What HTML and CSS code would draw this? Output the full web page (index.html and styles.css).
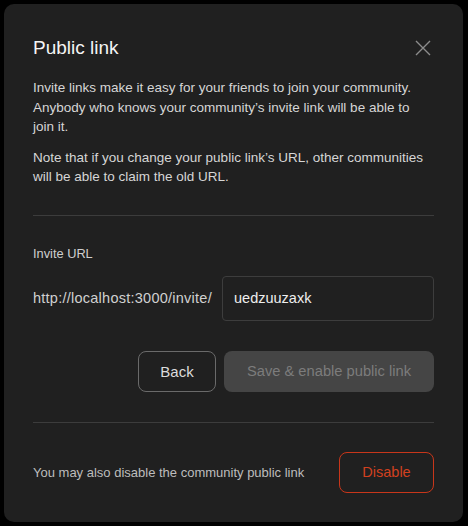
FILE: index.html
```html
<!DOCTYPE html>
<html>
<head>
<meta charset="utf-8">
<link rel="stylesheet" href="styles.css">
</head>
<body>
<div class="modal">
  <div class="header">
    <h1 class="title">Public link</h1>
    <button class="close" aria-label="Close">
      <svg width="16" height="16" viewBox="0 0 16 16"><path d="M1 1 L15 15 M15 1 L1 15" stroke="#8c8c8c" stroke-width="1.4" fill="none"/></svg>
    </button>
  </div>
  <p class="desc">Invite links make it easy for your friends to join your community. Anybody who knows your community’s invite link will be able to join it.</p>
  <p class="desc note">Note that if you change your public link’s URL, other communities will be able to claim the old URL.</p>
  <hr class="divider first">
  <div class="label">Invite URL</div>
  <div class="url-row">
    <span class="prefix">http://localhost:3000/invite/</span>
    <div class="input">uedzuuzaxk</div>
  </div>
  <div class="actions">
    <button class="btn back">Back</button>
    <button class="btn save">Save &amp; enable public link</button>
  </div>
  <hr class="divider second">
  <div class="footer">
    <span class="footer-text">You may also disable the community public link</span>
    <button class="btn disable">Disable</button>
  </div>
</div>
</body>
</html>
```
FILE: styles.css
```css
html, body {
  margin: 0;
  padding: 0;
  background: #000;
  font-family: "Liberation Sans", Arial, sans-serif;
}
.modal {
  margin: 4px;
  width: 459px;
  height: 518px;
  box-sizing: border-box;
  padding: 30px 29px 29px;
  background: #202020;
  border-radius: 10px;
  color: #ddd;
}
.header {
  display: flex;
  justify-content: space-between;
  align-items: center;
  height: 28px;
}
.title {
  margin: 0;
  font-size: 19px;
  font-weight: 500;
  color: #f4f4f4;
}
.close {
  background: none;
  border: 0;
  padding: 0;
  margin-right: 3px;
  width: 16px;
  height: 16px;
  display: flex;
}
.desc {
  margin: 16px 0 0;
  font-size: 13.5px;
  line-height: 19.5px;
  color: #d6d6d6;
}
.desc.note {
  margin-top: 11px;
}
.divider {
  border: 0;
  height: 1px;
  background: #3c3c3c;
  margin: 28px 0 0;
}
.label {
  margin-top: 30px;
  font-size: 12.8px;
  line-height: 16px;
  color: #cfcfcf;
}
.url-row {
  margin-top: 14px;
  display: flex;
  align-items: center;
  justify-content: space-between;
}
.prefix {
  font-size: 14.5px;
  letter-spacing: 0.25px;
  color: #d0d0d0;
}
.input {
  width: 212px;
  height: 45px;
  box-sizing: border-box;
  border: 1px solid #3d3d3d;
  border-radius: 4px;
  padding: 0 11px;
  display: flex;
  align-items: center;
  font-size: 14.5px;
  color: #eee;
}
.actions {
  margin-top: 30px;
  display: flex;
  justify-content: flex-end;
  gap: 8px;
}
.btn {
  height: 41px;
  box-sizing: border-box;
  border-radius: 8px;
  font-family: inherit;
  font-size: 14.7px;
  background: transparent;
  padding: 0;
}
.back {
  width: 78px;
  border: 1px solid #6a6a6a;
  color: #dcdcdc;
  font-size: 15px;
}
.save {
  width: 210px;
  border: 0;
  background: #454545;
  color: #7c7c7c;
}
.divider.second {
  margin-top: 30px;
}
.footer {
  margin-top: 29px;
  display: flex;
  justify-content: space-between;
  align-items: center;
}
.footer-text {
  font-size: 13px;
  color: #bdbdbd;
}
.disable {
  width: 95px;
  border: 1px solid #c8361a;
  color: #d2401f;
  font-size: 14.5px;
}
```
